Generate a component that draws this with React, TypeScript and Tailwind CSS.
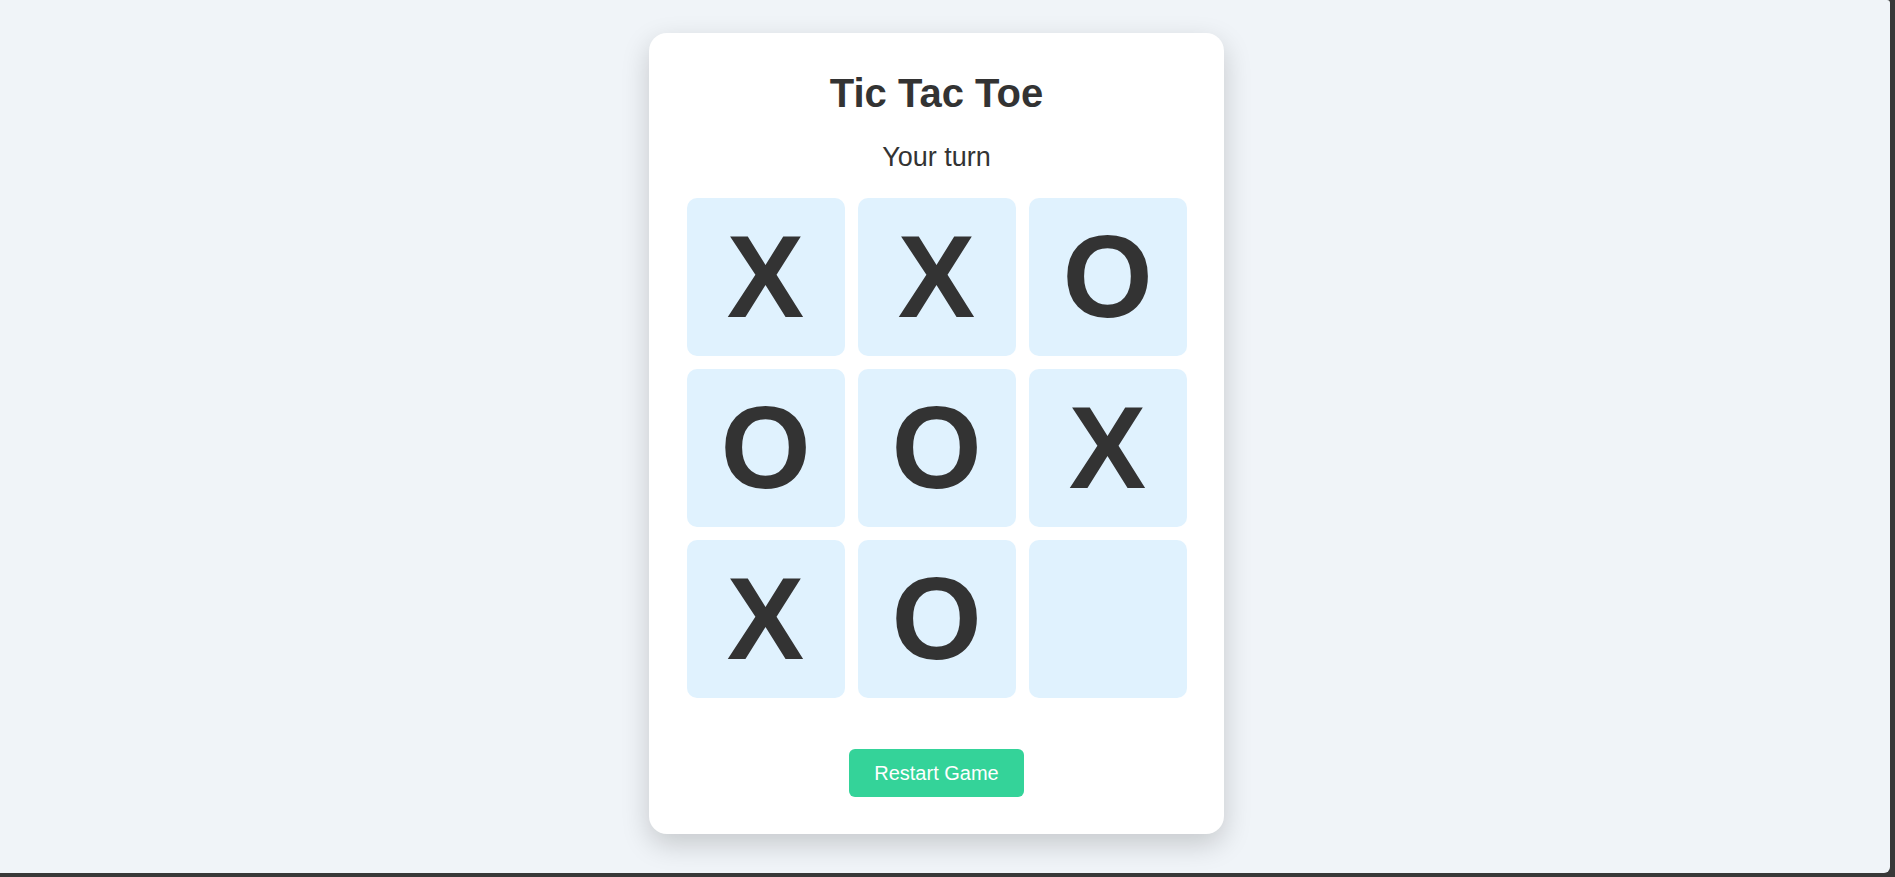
import React from 'react';

type Mark = 'X' | 'O' | null;

const board: Mark[] = ['X', 'X', 'O', 'O', 'O', 'X', 'X', 'O', null];

const Cell: React.FC<{ value: Mark }> = ({ value }) => (
  <button className="h-[158px] flex items-center justify-center rounded-[10px] bg-[#e0f2fe] text-[116px] font-bold leading-normal text-[#333333] cursor-pointer">
    {value}
  </button>
);

const App: React.FC = () => {
  return (
    <div className="w-[1895px] h-[877px] bg-[#383838] pr-[5px] pb-[4px] font-['Liberation_Sans',Arial,sans-serif]">
      <div className="h-full bg-[#f0f4f8] rounded-br-[6px] rounded-tr-[3px] flex justify-center items-start pt-[33px] pr-[17px]">
        <div className="w-[575px] bg-white rounded-[18px] shadow-[0_10px_28px_rgba(0,0,0,0.18)] pt-[38px] pb-[37px] flex flex-col items-center">
          <h1 className="text-[40px] leading-[44px] font-bold text-[#333333]">Tic Tac Toe</h1>
          <p className="mt-[26px] text-[27px] leading-[32px] text-[#333333]">Your turn</p>
          <div className="mt-[25px] w-[500px] grid grid-cols-3 gap-[13px]">
            {board.map((v, i) => (
              <Cell key={i} value={v} />
            ))}
          </div>
          <button className="mt-[51px] px-[25px] py-3 text-[20px] leading-6 text-white bg-[#34d399] rounded-md cursor-pointer">
            Restart Game
          </button>
        </div>
      </div>
    </div>
  );
};

export default App;
